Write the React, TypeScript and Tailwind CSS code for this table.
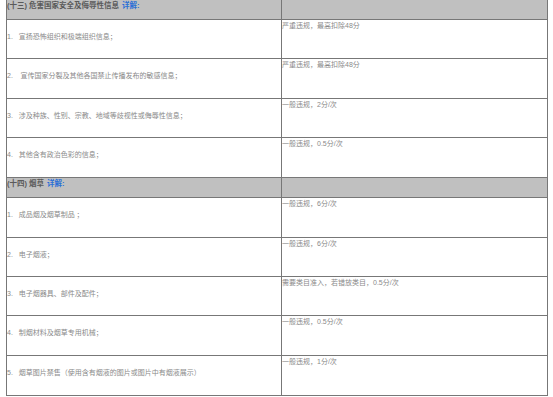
const font = { fontFamily: '"Liberation Sans", "Noto Sans CJK SC", sans-serif' };

type Row = { left: string; right: string; h: string };

const sections: { title: string; rows: Row[] }[] = [
  {
    title: "(十三) 危害国家安全及侮辱性信息",
    rows: [
      { left: "1.\u00a0\u00a0 宣扬恐怖组织和极端组织信息；", right: "严重违规，最高扣除48分", h: "h-[39px]" },
      { left: "2.\u00a0\u00a0\u00a0 宣传国家分裂及其他各国禁止传播发布的敏感信息；", right: "严重违规，最高扣除48分", h: "h-[40px]" },
      { left: "3.\u00a0\u00a0 涉及种族、性别、宗教、地域等歧视性或侮辱性信息；", right: "一般违规，2分/次", h: "h-[39px]" },
      { left: "4.\u00a0\u00a0 其他含有政治色彩的信息；", right: "一般违规，0.5分/次", h: "h-[40px]" },
    ],
  },
  {
    title: "(十四) 烟草",
    rows: [
      { left: "1.\u00a0\u00a0 成品烟及烟草制品 ；", right: "一般违规，6分/次", h: "h-[40px]" },
      { left: "2.\u00a0\u00a0 电子烟液；", right: "一般违规，6分/次", h: "h-[39px]" },
      { left: "3.\u00a0\u00a0 电子烟器具、部件及配件；", right: "需要类目准入，若错放类目，0.5分/次", h: "h-[39px]" },
      { left: "4.\u00a0\u00a0 制烟材料及烟草专用机械；", right: "一般违规，0.5分/次", h: "h-[40px]" },
      { left: "5.\u00a0\u00a0 烟草图片禁售（使用含有烟液的图片或图片中有烟液展示）", right: "一般违规，1分/次", h: "h-[40px]" },
    ],
  },
];

export default function App() {
  return (
    <div className="w-[553px] h-[397px] overflow-hidden bg-white" style={font}>
      <div className="ml-[6px] w-[542px] border-l border-r border-[#777]">
        {sections.map((s) => (
          <div key={s.title}>
            <div className="grid grid-cols-[274px_266px] h-[20px] bg-[#c0c0c0] border-b border-[#777]">
              <div className="pt-[1px] text-[7.5px] leading-[10px] font-semibold text-[#5a5a5a] whitespace-nowrap">
                {s.title}
                <span className="ml-[3px] font-bold text-[#2a6fd6]">详解:</span>
              </div>
              <div className="border-l border-[#777]" />
            </div>
            {s.rows.map((r, i) => (
              <div
                key={i}
                className={`grid grid-cols-[274px_266px] ${r.h} border-b border-[#777] text-[7px] text-[#8a8a8a] whitespace-nowrap`}
              >
                <div className="pt-[12px] leading-[9px] overflow-hidden">{r.left}</div>
                <div className="border-l border-[#777] pt-[1px] leading-[9px]">{r.right}</div>
              </div>
            ))}
          </div>
        ))}
      </div>
    </div>
  );
}
